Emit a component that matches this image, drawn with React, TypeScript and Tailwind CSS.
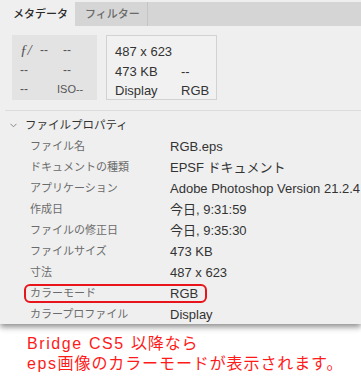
const rows: [string, string][] = [
  ["ファイル名", "RGB.eps"],
  ["ドキュメントの種類", "EPSF ドキュメント"],
  ["アプリケーション", "Adobe Photoshop Version 21.2.4 2"],
  ["作成日", "今日, 9:31:59"],
  ["ファイルの修正日", "今日, 9:35:30"],
  ["ファイルサイズ", "473 KB"],
  ["寸法", "487 x 623"],
  ["カラーモード", "RGB"],
  ["カラープロファイル", "Display"],
];

const jp = "font-['Liberation_Sans','Noto_Sans_CJK_JP',sans-serif]";

export default function App() {
  return (
    <div className={`w-[361px] h-[376px] bg-white overflow-hidden ${jp}`}>
      <div className="bg-[#efefef] pl-[2px] pt-[2px] shadow-[0_3px_6px_rgba(0,0,0,0.45)] h-[324px] relative">
        {/* tabs */}
        <div className="flex h-[24px] bg-[#d5d5d5] text-[11px]">
          <div className="w-[73px] bg-[#efefef] flex items-center pl-[11px] font-medium text-[#2a2a2a]">
            メタデータ
          </div>
          <div className="w-[73px] flex items-center pl-[10px] font-medium text-[#6a6a6a] border-r border-[#c4c4c4]">
            フィルター
          </div>
        </div>

        {/* camera / file summary */}
        <div className="flex gap-[9px] pl-[10px] pt-[9px] h-[84px]">
          <div className="w-[85px] h-[65px] bg-[#e3e3e3] text-[12px] text-[#555] grid grid-cols-[20px_17px_1fr] content-start pt-[6px] pl-[8px] leading-[19.5px]">
            <span className="italic font-['Liberation_Serif',serif] text-[15px]">ƒ/</span>
            <span>--</span>
            <span className="pl-[6px]">--</span>
            <span>--</span>
            <span></span>
            <span className="pl-[6px]">--</span>
            <span>--</span>
            <span></span>
            <span className="text-[11px]">ISO--</span>
          </div>
          <div className="w-[111px] h-[65px] border border-[#d2d2d2] bg-[#f1f1f1] text-[13px] text-[#333] grid grid-cols-[66px_1fr] content-start pt-[6px] pl-[8px] leading-[19.5px]">
            <span className="col-span-2">487 x 623</span>
            <span>473 KB</span>
            <span>--</span>
            <span>Display</span>
            <span>RGB</span>
          </div>
        </div>

        <div className="border-t border-[#dcdcdc] ml-[3px]" />

        {/* file properties */}
        <div className="pt-[4px]">
          <div className="flex items-center h-[21px] text-[11.5px] text-[#333]">
            <svg width="7" height="5" viewBox="0 0 7 5" className="ml-[8px] mr-[8px]">
              <path d="M0.5 0.8 L3.5 3.8 L6.5 0.8" stroke="#888" fill="none" strokeWidth="1" />
            </svg>
            ファイルプロパティ
          </div>
          {rows.map(([label, value]) => (
            <div key={label} className="flex items-center h-[21px] whitespace-nowrap">
              <span className="w-[168px] pl-[28px] text-[#6b6b6b] text-[11px] shrink-0">{label}</span>
              <span className="text-[#333] text-[13px]">{value}</span>
            </div>
          ))}
        </div>

        {/* highlight */}
        <div className="absolute left-[24px] top-[284px] w-[183px] h-[19px] border-2 border-[#e8141b] rounded-[6px]" />
      </div>

      <div className="pt-[10px] pl-[27px] text-[16px] leading-[20px] text-[#ff1a1a] tracking-[0.9px]">
        <div>
          <span className="tracking-[1.6px]">Bridge CS5 </span>以降なら
        </div>
        <div>
          <span className="tracking-[1.6px]">eps</span>画像のカラーモードが表示されます。
        </div>
      </div>
    </div>
  );
}
